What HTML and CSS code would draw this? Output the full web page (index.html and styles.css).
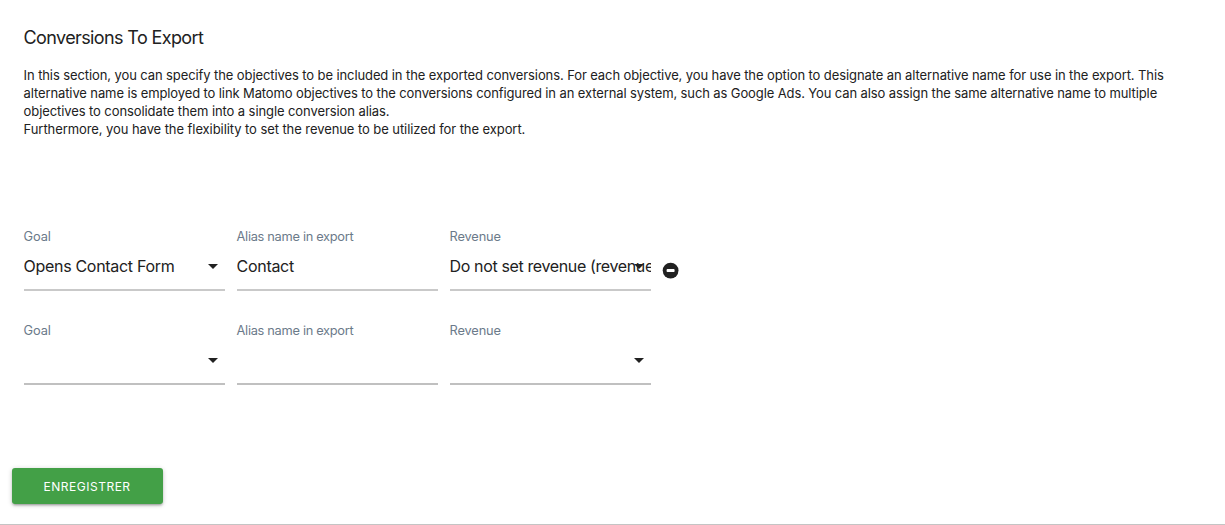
FILE: index.html
```html
<!DOCTYPE html>
<html lang="en">
<head>
<meta charset="utf-8">
<title>Conversions To Export</title>
<link rel="stylesheet" href="styles.css">
</head>
<body>
<main class="panel">
  <h2 class="title">Conversions To Export</h2>
  <div class="intro">
    <p class="line first">In this section, you can specify the objectives to be included in the exported conversions. For each objective, you have the option to designate an alternative name for use in the export. This</p>
    <p class="line second">alternative name is employed to link Matomo objectives to the conversions configured in an external system, such as Google Ads. You can also assign the same alternative name to multiple</p>
    <p class="line">objectives to consolidate them into a single conversion alias.</p>
    <p class="line last">Furthermore, you have the flexibility to set the revenue to be utilized for the export.</p>
  </div>
  <div class="rows">
    <div class="row">
      <div class="field"><span class="label">Goal</span><div class="value"><span class="text">Opens Contact Form</span><svg class="caret" viewBox="0 0 10 5"><path d="M0 0h10L5 5z"/></svg></div></div>
      <div class="field"><span class="label alias">Alias name in export</span><div class="value"><span class="text">Contact</span></div></div>
      <div class="field"><span class="label">Revenue</span><div class="value"><span class="text revenue">Do not set revenue (revenue</span><svg class="caret" viewBox="0 0 10 5"><path d="M0 0h10L5 5z"/></svg></div></div>
      <svg class="remove" viewBox="0 0 16 16"><circle cx="7.6" cy="7.6" r="7.9"/><rect class="dash" x="3.6" y="6.1" width="8" height="3" rx=".8"/></svg>
    </div>
    <div class="row">
      <div class="field crisp"><span class="label">Goal</span><div class="value"><svg class="caret" viewBox="0 0 10 5"><path d="M0 0h10L5 5z"/></svg></div></div>
      <div class="field crisp"><span class="label alias">Alias name in export</span><div class="value"></div></div>
      <div class="field crisp"><span class="label">Revenue</span><div class="value"><svg class="caret" viewBox="0 0 10 5"><path d="M0 0h10L5 5z"/></svg></div></div>
    </div>
  </div>
  <button class="save" type="button">ENREGISTRER</button>
</main>
</body>
</html>
```

FILE: styles.css
```css
* { box-sizing: border-box; }
body { margin: 0; background: #fff; color: #212121; font-family: Inter, "Liberation Sans", sans-serif; }
.panel { height: 525px; padding: 26px 12px 0 11.6px; border-bottom: 1px solid #c4c4c4; display: flex; flex-direction: column; }
.title { margin: 0 12px; height: 24px; line-height: 24px; font-size: 18px; font-weight: 400; letter-spacing: -.62px; }
.intro { margin: 16px 12px 0; }
.line { margin: 0; font-size: 13px; line-height: 18px; white-space: nowrap; letter-spacing: -.09px; }
.first { letter-spacing: -.098px; }
.second { letter-spacing: -.112px; }
.last { letter-spacing: -.075px; }
.rows { margin: 89px 12px 0; display: flex; flex-direction: column; gap: 30px; }
.row { display: flex; gap: 12px; height: 64px; }
.field { width: 201px; height: 64px; border-bottom: 2px solid #c9c9c9; }
.crisp { border-bottom-color: #c0c0c0; }
.label { display: block; font-size: 12.8px; line-height: 20px; color: #6b7a8a; white-space: nowrap; letter-spacing: -.15px; }
.alias { letter-spacing: -.3px; }
.value { position: relative; height: 40px; overflow: hidden; }
.text { display: block; font-size: 16px; line-height: 38px; white-space: nowrap; letter-spacing: -.31px; }
.revenue { letter-spacing: -.37px; }
.caret { position: absolute; right: 7px; top: 17px; width: 10px; height: 5px; fill: #212121; }
.remove { width: 16px; height: 16px; margin-top: 36px; fill: #212121; overflow: visible; }
.dash { fill: #fff; }
.save { width: 151px; height: 36px; margin-top: 83px; border: 0; border-radius: 3px; background: #43a047; color: #fff; font: 400 12px Inter, sans-serif; letter-spacing: .5px; box-shadow: 0 2px 2px rgba(0,0,0,.14), 0 3px 1px -2px rgba(0,0,0,.12), 0 1px 5px rgba(0,0,0,.2); }
```
